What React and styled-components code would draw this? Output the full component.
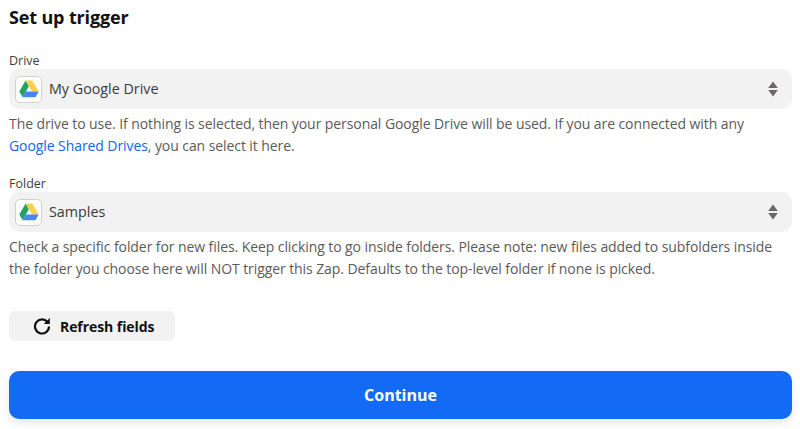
import styled, { createGlobalStyle } from 'styled-components'

const GlobalStyle = createGlobalStyle`
    html, body{
        margin: 0;
        padding: 0;
        background: #fff;
        overflow: hidden;
    }
    body{
        font-family: "Open Sans", "Noto Sans", sans-serif;
        color: #2d2e2e;
    }
`

function DriveLogo() {
    return (
        <svg width="20" height="18" viewBox="0 0 19 17">
            <path d="M6.3 0.4L0.3 10.9 3.4 16.4 9.4 5.8z" fill="#1fa463" />
            <path d="M6.3 0.4H12.6L18.7 10.9H12.4z" fill="#ffd04b" />
            <path d="M6.4 10.9H18.7L15.6 16.4H3.4z" fill="#4687f4" />
        </svg>
    )
}

function Arrows() {
    return (
        <svg width="10" height="16" viewBox="0 0 10 16">
            <path d="M5 0.5L9.8 7H0.2z" fill="#6b6668" />
            <path d="M5 15.5L0.2 9H9.8z" fill="#6b6668" />
        </svg>
    )
}

function RefreshIcon() {
    return (
        <svg width="18" height="18" viewBox="0 0 18 18" fill="none">
            <path d="M14.3 4.9A7 7 0 1 0 16 9.4" stroke="#0f0f0f" strokeWidth="2.2" />
            <path d="M16.8 1V7H10.8z" fill="#0f0f0f" />
        </svg>
    )
}

function Field({ label, value, children }) {
    return (
        <FieldWrap>
            <Label>{label}</Label>
            <Select>
                <LogoBox><DriveLogo /></LogoBox>
                <Value>{value}</Value>
                <Arrows />
            </Select>
            <Help>{children}</Help>
        </FieldWrap>
    )
}

export default function App() {
    return (
        <Container>
            <GlobalStyle />
            <Title>Set up trigger</Title>
            <Field label="Drive" value="My Google Drive">
                The drive to use. If nothing is selected, then your personal Google Drive will be used. If you are connected with any{' '}
                <HelpLink>Google Shared Drives</HelpLink>, you can select it here.
            </Field>
            <Field label="Folder" value="Samples">
                Check a specific folder for new files. Keep clicking to go inside folders. Please note: new files added to subfolders inside the folder you choose here will NOT trigger this Zap. Defaults to the top-level folder if none is picked.
            </Field>
            <RefreshButton>
                <RefreshIcon />
                Refresh fields
            </RefreshButton>
            <ContinueButton>Continue</ContinueButton>
        </Container>
    )
}

const Container = styled.div`
    width: 800px;
    height: 429px;
    box-sizing: border-box;
    padding: 4px 8px 0 9px;
    display: flex;
    flex-direction: column;
    align-items: stretch;
`
const Title = styled.h1`
    margin: 0 0 23px;
    font-size: 18px;
    line-height: 26px;
    font-weight: 700;
    letter-spacing: -0.15px;
    color: #111;
`
const FieldWrap = styled.div`
    display: flex;
    flex-direction: column;
    margin-bottom: 19px;
`
const Label = styled.label`
    font-size: 12.5px;
    line-height: 16px;
    font-weight: 500;
    color: #403f3e;
`
const Select = styled.div`
    height: 40px;
    display: flex;
    align-items: center;
    padding: 0 14px 0 6px;
    background: #f2f2f2;
    border-radius: 10px;
`
const LogoBox = styled.div`
    width: 27px;
    height: 27px;
    box-sizing: border-box;
    display: flex;
    align-items: center;
    justify-content: center;
    background: #fff;
    border: 1px solid #d2d0ce;
    border-radius: 5px;
    margin-right: 7px;
`
const Value = styled.span`
    flex: 1;
    padding-bottom: 2px;
    font-size: 14.3px;
    font-weight: 500;
    color: #3a3937;
`
const Help = styled.p`
    margin: 4px 0 0;
    font-size: 14px;
    line-height: 22px;
    color: #5c5a58;
    letter-spacing: -0.08px;
`
const HelpLink = styled.a`
    color: #1464f0;
`
const RefreshButton = styled.button`
    width: 166px;
    height: 30px;
    margin-top: 12px;
    padding: 0 0 0 24px;
    align-self: flex-start;
    display: flex;
    align-items: center;
    gap: 9px;
    border: none;
    border-radius: 6px;
    background: #f2f2f2;
    color: #111;
    font-family: inherit;
    font-size: 14px;
    font-weight: 700;
    letter-spacing: -0.07px;
`
const ContinueButton = styled.button`
    height: 48px;
    margin-top: 30px;
    border: none;
    border-radius: 10px;
    background: #136bf5;
    color: #fff;
    font-family: inherit;
    font-size: 16px;
    font-weight: 700;
    box-shadow: 0 4px 10px rgba(0, 0, 0, 0.1);
`
